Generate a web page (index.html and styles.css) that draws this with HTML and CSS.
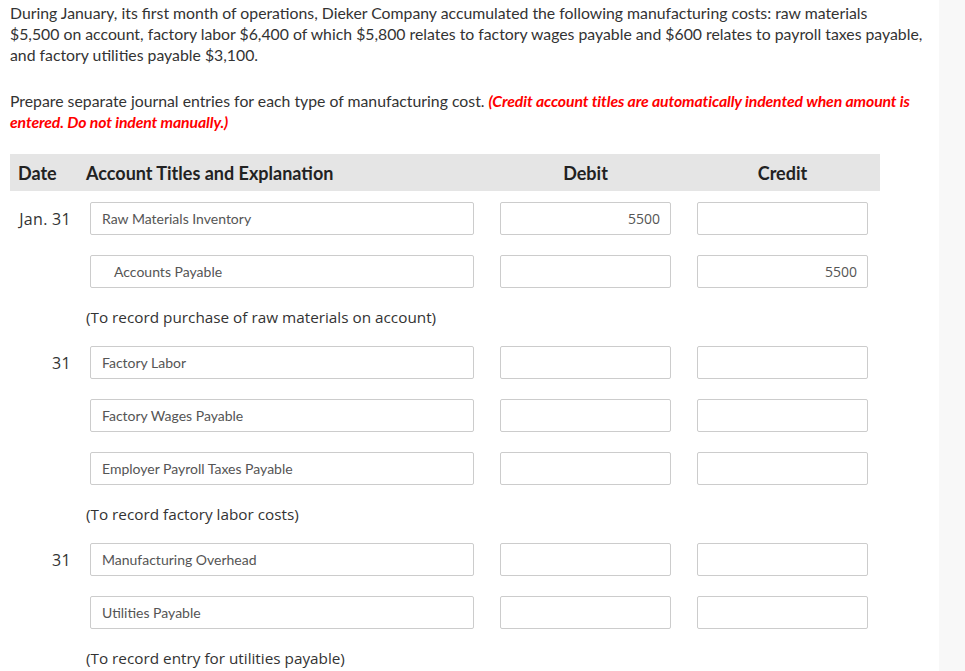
FILE: index.html
```html
<!DOCTYPE html>
<html>
<head>
<meta charset="utf-8">
<link rel="stylesheet" href="styles.css">
</head>
<body>
<div class="page">
  <p class="q">During January, its first month of operations, Dieker Company accumulated the following manufacturing costs: raw materials $5,500&nbsp;on account, factory labor $6,400 of which $5,800 relates to factory wages payable and $600 relates to payroll taxes payable, and factory utilities payable $3,100.</p>
  <p class="q q2">Prepare separate journal entries for each type of manufacturing cost. <em class="note">(Credit account titles are automatically indented when amount is entered. Do not indent manually.)</em></p>

  <div class="journal">
    <div class="head">
      <div class="h-date">Date</div>
      <div class="h-acct">Account Titles and Explanation</div>
      <div class="h-num">Debit</div>
      <div class="h-num">Credit</div>
    </div>
    <div class="grid">
      <div class="date">Jan. 31</div>
      <div class="field">Raw Materials Inventory</div>
      <div class="field num">5500</div>
      <div class="field num"></div>

      <div class="date"></div>
      <div class="field indent">Accounts Payable</div>
      <div class="field num"></div>
      <div class="field num">5500</div>

      <div class="date"></div>
      <div class="expl">(To record purchase of raw materials on account)</div>

      <div class="date">31</div>
      <div class="field">Factory Labor</div>
      <div class="field num"></div>
      <div class="field num"></div>

      <div class="date"></div>
      <div class="field">Factory Wages Payable</div>
      <div class="field num"></div>
      <div class="field num"></div>

      <div class="date"></div>
      <div class="field">Employer Payroll Taxes Payable</div>
      <div class="field num"></div>
      <div class="field num"></div>

      <div class="date"></div>
      <div class="expl">(To record factory labor costs)</div>

      <div class="date">31</div>
      <div class="field">Manufacturing Overhead</div>
      <div class="field num"></div>
      <div class="field num"></div>

      <div class="date"></div>
      <div class="field">Utilities Payable</div>
      <div class="field num"></div>
      <div class="field num"></div>

      <div class="date"></div>
      <div class="expl">(To record entry for utilities payable)</div>
    </div>
  </div>
</div>
</body>
</html>
```
FILE: styles.css
```css
html, body {
  margin: 0;
  padding: 0;
  background: #f8f8f8;
}
.page {
  width: 939px;
  height: 671px;
  overflow: hidden;
  background: #ffffff;
  box-sizing: border-box;
  padding: 2px 0 0 10px;
  font-family: Lato, "Liberation Sans", sans-serif;
  color: #333333;
}
.q {
  margin: 0;
  font-size: 15.8px;
  line-height: 21px;
  width: 913px;
}
.q2 {
  margin-top: 25px;
}
.note {
  color: #ff0000;
  font-weight: 700;
  font-style: italic;
  letter-spacing: -0.12px;
}
.journal {
  width: 870px;
  margin-top: 22px;
}
.head {
  display: grid;
  grid-template-columns: 54px 384px 171px 171px;
  column-gap: 26px;
  height: 37px;
  align-items: center;
  background: #e5e5e5;
  font-weight: 700;
  font-size: 18px;
  color: #222222;
}
.h-date {
  padding-left: 8px;
  white-space: nowrap;
}
.h-acct {
  margin-left: -4px;
}
.h-num {
  text-align: center;
}
.grid {
  display: grid;
  grid-template-columns: 54px 384px 171px 171px;
  grid-template-rows: 33px 33px 18px 33px 33px 33px 18px 33px 33px 18px;
  column-gap: 26px;
  row-gap: 20px;
  margin-top: 11px;
}
.date {
  grid-column: 1;
  align-self: center;
  text-align: right;
  margin-right: -7px;
  white-space: nowrap;
  font-family: "Open Sans", "DejaVu Sans", sans-serif;
  font-size: 16px;
  letter-spacing: 0.3px;
  color: #333333;
}
.field {
  box-sizing: border-box;
  height: 33px;
  border: 1px solid #cccccc;
  border-radius: 2px;
  padding: 0 11px;
  font-size: 14px;
  line-height: 31px;
  color: #555555;
  white-space: nowrap;
}
.field.indent {
  padding-left: 23px;
}
.field.num {
  text-align: right;
  padding-right: 10px;
  font-family: "Open Sans", "DejaVu Sans", sans-serif;
  font-size: 14px;
}
.expl {
  grid-column: 2 / span 3;
  align-self: center;
  margin-left: -4px;
  font-family: "Open Sans", "DejaVu Sans", sans-serif;
  font-size: 15.3px;
  line-height: 18px;
  color: #333333;
}
```
